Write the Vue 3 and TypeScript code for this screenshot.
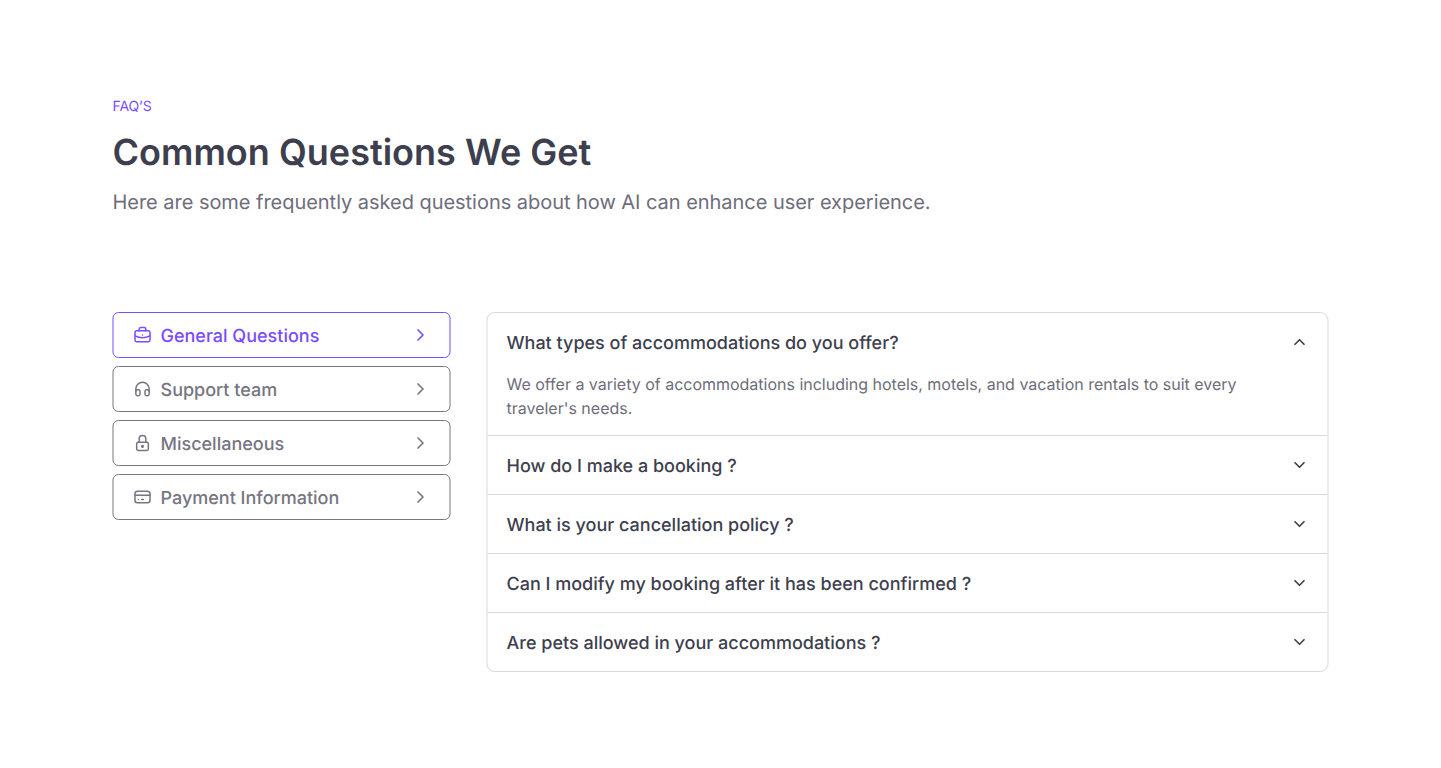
<script setup lang="ts">
import { ref } from 'vue'

interface Category {
  label: string
  icon: string[]
}

interface Question {
  title: string
  answer: string
}

const categories: Category[] = [
  {
    label: 'General Questions',
    icon: [
      'M3 9a2 2 0 0 1 2-2h14a2 2 0 0 1 2 2v9a2 2 0 0 1-2 2H5a2 2 0 0 1-2-2z',
      'M8 7V5a2 2 0 0 1 2-2h4a2 2 0 0 1 2 2v2',
      'M12 12v.01',
      'M3 13a20 20 0 0 0 18 0',
    ],
  },
  {
    label: 'Support team',
    icon: [
      'M4 15a2 2 0 0 1 2-2h1a2 2 0 0 1 2 2v3a2 2 0 0 1-2 2H6a2 2 0 0 1-2-2z',
      'M15 15a2 2 0 0 1 2-2h1a2 2 0 0 1 2 2v3a2 2 0 0 1-2 2h-1a2 2 0 0 1-2-2z',
      'M4 15v-3a8 8 0 0 1 16 0v3',
    ],
  },
  {
    label: 'Miscellaneous',
    icon: [
      'M5 13a2 2 0 0 1 2-2h10a2 2 0 0 1 2 2v6a2 2 0 0 1-2 2H7a2 2 0 0 1-2-2z',
      'M11 16a1 1 0 1 0 2 0a1 1 0 0 0-2 0',
      'M8 11V7a4 4 0 1 1 8 0v4',
    ],
  },
  {
    label: 'Payment Information',
    icon: [
      'M3 8a3 3 0 0 1 3-3h12a3 3 0 0 1 3 3v8a3 3 0 0 1-3 3H6a3 3 0 0 1-3-3z',
      'M3 10h18',
      'M7 15h.01',
      'M11 15h2',
    ],
  },
]

const questions: Question[] = [
  {
    title: 'What types of accommodations do you offer?',
    answer:
      "We offer a variety of accommodations including hotels, motels, and vacation rentals to suit every traveler's needs.",
  },
  { title: 'How do I make a booking ?', answer: '' },
  { title: 'What is your cancellation policy ?', answer: '' },
  { title: 'Can I modify my booking after it has been confirmed ?', answer: '' },
  { title: 'Are pets allowed in your accommodations ?', answer: '' },
]

const activeCategory = ref(0)
const openQuestion = ref(0)

function toggle(index: number): void {
  openQuestion.value = openQuestion.value === index ? -1 : index
}
</script>

<template>
  <main class="page">
    <section class="faq">
      <header class="intro">
        <p class="eyebrow">FAQ’S</p>
        <h1 class="heading">Common Questions We Get</h1>
        <p class="lead">Here are some frequently asked questions about how AI can enhance user experience.</p>
      </header>

      <div class="columns">
        <nav class="tabs">
          <button
            v-for="(category, i) in categories"
            :key="category.label"
            type="button"
            class="tab"
            :class="{ active: i === activeCategory }"
            @click="activeCategory = i"
          >
            <svg class="icon glyph" viewBox="0 0 24 24">
              <path v-for="d in category.icon" :key="d" :d="d" />
            </svg>
            <span class="tab-label">{{ category.label }}</span>
            <svg class="icon" viewBox="0 0 24 24"><path d="M9 6l6 6l-6 6" /></svg>
          </button>
        </nav>

        <div class="accordion">
          <article v-for="(q, i) in questions" :key="q.title" class="item">
            <button type="button" class="question" @click="toggle(i)">
              <span class="title">{{ q.title }}</span>
              <svg class="icon small" viewBox="0 0 24 24">
                <path :d="i === openQuestion ? 'M6 15l6-6l6 6' : 'M6 9l6 6l6-6'" />
              </svg>
            </button>
            <p v-if="i === openQuestion && q.answer" class="answer">{{ q.answer }}</p>
          </article>
        </div>
      </div>
    </section>
  </main>
</template>

<style>
body {
  background: #fff;
}
</style>

<style scoped>
.page {
  box-sizing: border-box;
  min-height: 768px;
  padding: 96px 112px;
  font-family: Inter, 'Liberation Sans', sans-serif;
  text-rendering: geometricPrecision;
  color: #3e3f4e;
}

.faq {
  width: 1216px;
  transform: translateX(0.5px);
}

.intro {
  margin-bottom: 96px;
}

p,
h1 {
  margin: 0;
}

.eyebrow {
  padding-top: 1px;
  font-size: 14px;
  line-height: 20px;
  letter-spacing: -0.1px;
  color: #794dff;
}

.heading {
  margin-top: 15px;
  font-size: 36px;
  line-height: 40px;
  font-weight: 600;
  letter-spacing: 0.02px;
}

.lead {
  margin-top: 16px;
  font-size: 20px;
  line-height: 28px;
  letter-spacing: -0.036px;
  color: #6e6d7a;
}

.columns {
  display: grid;
  grid-template-columns: 338px 842px;
  gap: 36px;
  align-items: start;
}

.tabs {
  display: flex;
  flex-direction: column;
  gap: 8px;
}

button {
  font: inherit;
  text-rendering: inherit;
  background: none;
  cursor: pointer;
}

.tab {
  box-sizing: border-box;
  display: flex;
  align-items: center;
  gap: 8px;
  height: 46px;
  padding: 0 19px;
  border: 1px solid currentColor;
  border-radius: 6px;
  font-size: 18px;
  line-height: 28px;
  font-weight: 500;
  color: #767582;
}

.tab.active {
  color: #794dff;
}

.tab-label {
  flex: 1;
  padding-top: 3px;
  text-align: left;
}

.title {
  padding-top: 3px;
}

.icon {
  flex: none;
  width: 20px;
  height: 20px;
  fill: none;
  stroke: currentColor;
  stroke-width: 2;
  stroke-linecap: round;
  stroke-linejoin: round;
}

.icon.glyph {
  stroke-width: 1.8;
}

.icon.small {
  width: 18px;
  height: 18px;
  stroke-width: 2.2;
}

.accordion {
  box-sizing: border-box;
  border: 1px solid #d9d9db;
  border-radius: 8px;
}

.item + .item {
  border-top: 1px solid #d9d9db;
}

.question {
  box-sizing: border-box;
  display: flex;
  align-items: center;
  justify-content: space-between;
  width: 100%;
  height: 58px;
  padding: 0 19px;
  border: 0;
  font-size: 18px;
  line-height: 28px;
  font-weight: 500;
  text-align: left;
  color: inherit;
}

.answer {
  padding: 1px 79px 15px 19px;
  font-size: 16px;
  line-height: 24px;
  letter-spacing: -0.01px;
  color: #6e6d7a;
}
</style>
